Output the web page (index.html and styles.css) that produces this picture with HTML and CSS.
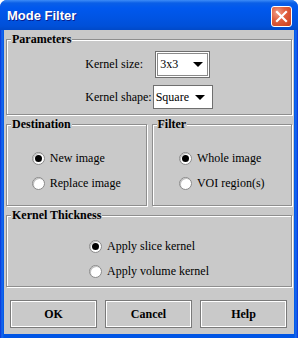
FILE: index.html
```html
<!DOCTYPE html>
<html lang="en">
<head>
  <meta charset="UTF-8">
  <title>Mode Filter</title>
  <link rel="stylesheet" href="styles.css">
</head>
<body>
  <div class="window">
    <div class="titlebar">
      <span class="title">Mode Filter</span>
      <span class="close">
        <svg width="21" height="21" viewBox="0 0 21 21">
          <path d="M6 6 L15 15 M15 6 L6 15" stroke="#fff" stroke-width="2.2" stroke-linecap="square"/>
        </svg>
      </span>
    </div>

    <div class="content">
      <fieldset class="group params">
        <legend>Parameters</legend>
        <div class="form-grid">
          <label>Kernel size:</label>
          <div class="combo combo-size focused"><span>3x3</span><i class="arrow"></i></div>
          <label>Kernel shape:</label>
          <div class="combo combo-shape"><span>Square</span><i class="arrow"></i></div>
        </div>
      </fieldset>

      <div class="pair">
        <fieldset class="group choices">
          <legend>Destination</legend>
          <div class="radios">
            <div class="radio checked"><i></i>New image</div>
            <div class="radio"><i></i>Replace image</div>
          </div>
        </fieldset>
        <fieldset class="group choices">
          <legend>Filter</legend>
          <div class="radios">
            <div class="radio checked"><i></i>Whole image</div>
            <div class="radio"><i></i>VOI region(s)</div>
          </div>
        </fieldset>
      </div>

      <fieldset class="group thickness">
        <legend>Kernel Thickness</legend>
        <div class="radios">
          <div class="radio checked"><i></i>Apply slice kernel</div>
          <div class="radio"><i></i>Apply volume kernel</div>
        </div>
      </fieldset>

      <div class="buttons">
        <button>OK</button>
        <button>Cancel</button>
        <button>Help</button>
      </div>
    </div>
  </div>
</body>
</html>
```

FILE: styles.css
```css
*, *::before, *::after { box-sizing: border-box; }
html, body { margin: 0; padding: 0; }
body { width: 298px; height: 338px; background: #fff; color: #000; }

.window {
  width: 298px; height: 338px;
  background: linear-gradient(90deg, #0831d9 0, #166aee 2px, #0055e5 4px, #0055e5 294px, #166aee 296px, #0831d9 298px);
  border-radius: 7px 7px 0 0;
  display: flex; flex-direction: column;
  padding: 0 4px 4px;
}
.titlebar {
  height: 30px; margin: 0 -4px; padding: 0 6px 0 7px;
  border-radius: 7px 7px 0 0;
  background: linear-gradient(180deg, #3d8cf7 0, #0a5fe7 3px, #0058ee 8px, #0054e3 18px, #0050d8 26px, #0049c8 30px);
  display: flex; align-items: center; justify-content: space-between;
}
.title {
  font-family: 'Liberation Sans', sans-serif; font-weight: 700; font-size: 13px;
  color: #fff; text-shadow: 1px 1px 0 #0a1e8c; padding-top: 1px;
}
.close {
  width: 21px; height: 21px; margin-top: 2px;
  border: 1px solid #fff; border-radius: 3px;
  background: radial-gradient(circle at 30% 30%, #f0a08a 0, #e2603f 40%, #c83d1c 100%);
  display: flex; align-items: center; justify-content: center;
}
.close svg { display: block; margin: -1px; }

.content {
  flex: 1; background: #c9c9c9;
  padding: 1px 2px 6px;
  display: flex; flex-direction: column;
  font-family: 'Liberation Serif', 'Times New Roman', serif; font-size: 12px;
}

.group {
  margin: 0; padding: 0;
  border: 1px solid #8e8e8e;
  box-shadow: inset 1px 1px 0 #fff, 1px 1px 0 #fff;
  min-width: 0;
}
.group legend {
  font-weight: 700; font-size: 12px;
  margin-left: 4px; padding: 0 1px;
  background: #c9c9c9; line-height: 16px;
}

.params { height: 84px; display: flex; justify-content: center; }
.form-grid {
  display: grid; grid-template-columns: auto auto;
  align-items: center; row-gap: 7px;
  padding-top: 4px;
}
.form-grid label { white-space: nowrap; padding-right: 1px; }
.combo {
  justify-self: center;
  height: 24px; background: #fff;
  border: 1px solid #6f6f6f;
  display: flex; align-items: center; justify-content: space-between;
  padding: 0 7px 0 2px;
}
.combo-size { width: 55px; }
.combo-shape { width: 60px; }
.combo.focused {
  height: 27px; padding: 0 6px 0 4px;
  box-shadow: inset 0 0 0 1px #fff, inset 0 0 0 2px #8a8a8a;
}
.arrow {
  width: 0; height: 0;
  border-left: 5px solid transparent; border-right: 5px solid transparent;
  border-top: 5px solid #000;
}

.pair { display: flex; gap: 5px; margin-top: 1px; }
.choices { flex: 1; height: 90px; }
.thickness { height: 80px; margin-top: 1px; }

.radios {
  display: flex; flex-direction: column; align-items: flex-start;
  width: max-content; margin: 0 auto;
}
.choices .radios { padding-top: 14px; }
.thickness .radios { padding-top: 11px; }
.radio {
  display: flex; align-items: center; gap: 5px;
  height: 25px;
}
.radio i {
  width: 13px; height: 13px; border-radius: 50%;
  background: #fff; border: 1px solid #8a8a8a;
  box-shadow: inset 1px 1px 0 #c0c0c0;
  display: flex; align-items: center; justify-content: center;
}
.radio.checked i::after {
  content: ''; width: 7px; height: 7px; border-radius: 50%; background: #000;
}

.buttons {
  display: flex; gap: 8px; margin-top: auto; padding: 0 5px 0 4px;
}
.buttons button {
  flex: 1; height: 28px;
  font-family: 'Liberation Serif', serif; font-weight: 700; font-size: 12px;
  background: #c9c9c9; color: #000;
  border: 1px solid #7a7a7a;
  box-shadow: inset 1px 1px 0 #fff, inset -1px -1px 0 #fff;
  padding: 0;
}
```
